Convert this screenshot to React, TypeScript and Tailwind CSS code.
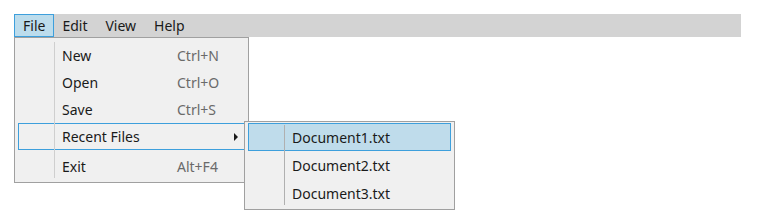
import React from "react";

const font = { fontFamily: '"Noto Sans", "Segoe UI", sans-serif' };

type Item = { label: string; shortcut?: string; submenu?: boolean; active?: boolean; gapBefore?: boolean };

const fileItems: Item[] = [
  { label: "New", shortcut: "Ctrl+N" },
  { label: "Open", shortcut: "Ctrl+O" },
  { label: "Save", shortcut: "Ctrl+S" },
  { label: "Recent Files", submenu: true, active: true },
  { label: "Exit", shortcut: "Alt+F4", gapBefore: true },
];

const recent = ["Document1.txt", "Document2.txt", "Document3.txt"];

function MenuRow({ item }: { item: Item }) {
  return (
    <div
      className={`flex h-[27px] items-center border text-[14px] ${
        item.active ? "border-[#3d9fdc]" : "border-transparent"
      } ${item.gapBefore ? "mt-[3px]" : ""}`}
    >
      <span className="w-[158px] shrink-0 pl-[43px] text-[#1a1a1a]">{item.label}</span>
      {item.shortcut && <span className="text-[#6a6a6a]">{item.shortcut}</span>}
      {item.submenu && (
        <span className="ml-[57px] h-0 w-0 border-y-[4px] border-l-[4px] border-y-transparent border-l-[#1a1a1a]" />
      )}
    </div>
  );
}

export default function App() {
  return (
    <div className="h-[222px] w-[757px] bg-white pl-[14px] pt-[14px]" style={font}>
      <div className="relative flex h-[23px] w-[727px] items-stretch bg-[#d3d3d3] text-[14px] text-[#1a1a1a]">
        <div className="flex items-center border border-[#3d9fdc] bg-[#bcdcec] px-[8px]">File</div>
        <div className="flex items-center pl-[8px] pr-[9px]">Edit</div>
        <div className="flex items-center px-[9px]">View</div>
        <div className="flex items-center px-[9px]">Help</div>

        {/* File dropdown */}
        <div className="absolute left-0 top-[23px] h-[146px] w-[235px] border border-[#a0a0a0] bg-[#f0f0f0] pl-[3px] pr-[1px] pt-[4px]">
          <div className="absolute bottom-[4px] left-[39px] top-[4px] w-px bg-[#cfcfcf]" />
          {fileItems.map((it) => (
            <MenuRow key={it.label} item={it} />
          ))}
        </div>

        {/* Recent files submenu */}
        <div className="absolute left-[230px] top-[107px] h-[89px] w-[211px] border border-[#a0a0a0] bg-[#f0f0f0] px-[3px] pt-[1px]">
          <div className="absolute bottom-[4px] left-[39px] top-[3px] w-px bg-[#b0b0b0]" />
          {recent.map((r, i) => (
            <div
              key={r}
              className={`flex h-[28px] items-center border ${
                i === 0 ? "border-[#3d9fdc] bg-[#bfdceb]" : "border-transparent"
              }`}
            >
              <span className="relative pl-[43px] text-[14px] text-[#1a1a1a]">{r}</span>
            </div>
          ))}
        </div>
      </div>
    </div>
  );
}
